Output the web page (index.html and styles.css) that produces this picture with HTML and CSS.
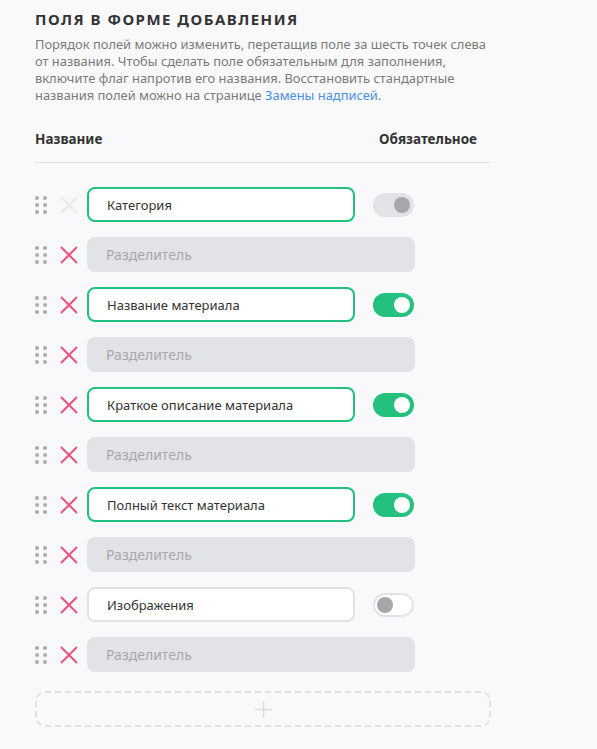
FILE: index.html
```html
<!DOCTYPE html>
<html lang="ru">
<head>
<meta charset="utf-8">
<title>Поля в форме добавления</title>
<link rel="stylesheet" href="styles.css">
</head>
<body>
<div class="page">
  <h2 class="title">Поля в форме добавления</h2>
  <p class="desc">Порядок полей можно изменить, перетащив поле за шесть точек слева от названия. Чтобы сделать поле обязательным для заполнения, включите флаг напротив его названия. Восстановить стандартные названия полей можно на странице <a href="#" class="link">Замены надписей</a>.</p>

  <div class="thead">
    <span>Название</span>
    <span class="thead-req">Обязательное</span>
  </div>

  <div class="rows">
    <div class="row">
      <span class="grip"><i></i><i></i><i></i><i></i><i></i><i></i></span>
      <svg class="del del-off" viewBox="0 0 18 18"><path d="M1 1L17 17M17 1L1 17"/></svg>
      <div class="field">Категория</div>
      <span class="toggle toggle-locked"><span class="knob"></span></span>
    </div>
    <div class="row">
      <span class="grip"><i></i><i></i><i></i><i></i><i></i><i></i></span>
      <svg class="del" viewBox="0 0 18 18"><path d="M1 1L17 17M17 1L1 17"/></svg>
      <div class="sep">Разделитель</div>
    </div>
    <div class="row">
      <span class="grip"><i></i><i></i><i></i><i></i><i></i><i></i></span>
      <svg class="del" viewBox="0 0 18 18"><path d="M1 1L17 17M17 1L1 17"/></svg>
      <div class="field">Название материала</div>
      <span class="toggle toggle-on"><span class="knob"></span></span>
    </div>
    <div class="row">
      <span class="grip"><i></i><i></i><i></i><i></i><i></i><i></i></span>
      <svg class="del" viewBox="0 0 18 18"><path d="M1 1L17 17M17 1L1 17"/></svg>
      <div class="sep">Разделитель</div>
    </div>
    <div class="row">
      <span class="grip"><i></i><i></i><i></i><i></i><i></i><i></i></span>
      <svg class="del" viewBox="0 0 18 18"><path d="M1 1L17 17M17 1L1 17"/></svg>
      <div class="field">Краткое описание материала</div>
      <span class="toggle toggle-on"><span class="knob"></span></span>
    </div>
    <div class="row">
      <span class="grip"><i></i><i></i><i></i><i></i><i></i><i></i></span>
      <svg class="del" viewBox="0 0 18 18"><path d="M1 1L17 17M17 1L1 17"/></svg>
      <div class="sep">Разделитель</div>
    </div>
    <div class="row">
      <span class="grip"><i></i><i></i><i></i><i></i><i></i><i></i></span>
      <svg class="del" viewBox="0 0 18 18"><path d="M1 1L17 17M17 1L1 17"/></svg>
      <div class="field">Полный текст материала</div>
      <span class="toggle toggle-on"><span class="knob"></span></span>
    </div>
    <div class="row">
      <span class="grip"><i></i><i></i><i></i><i></i><i></i><i></i></span>
      <svg class="del" viewBox="0 0 18 18"><path d="M1 1L17 17M17 1L1 17"/></svg>
      <div class="sep">Разделитель</div>
    </div>
    <div class="row">
      <span class="grip"><i></i><i></i><i></i><i></i><i></i><i></i></span>
      <svg class="del" viewBox="0 0 18 18"><path d="M1 1L17 17M17 1L1 17"/></svg>
      <div class="field field-plain">Изображения</div>
      <span class="toggle toggle-off"><span class="knob"></span></span>
    </div>
    <div class="row">
      <span class="grip"><i></i><i></i><i></i><i></i><i></i><i></i></span>
      <svg class="del" viewBox="0 0 18 18"><path d="M1 1L17 17M17 1L1 17"/></svg>
      <div class="sep">Разделитель</div>
    </div>
  </div>

  <div class="add">
    <svg class="plus" viewBox="0 0 20 20"><path d="M10 1V19M1 10H19"/></svg>
  </div>
</div>
</body>
</html>
```

FILE: styles.css
```css
* { box-sizing: border-box; }

html, body {
  margin: 0;
  background: #f9f9fb;
}

body {
  font-family: "Noto Sans", "Open Sans", "Liberation Sans", sans-serif;
  color: #333;
}

.page {
  width: 456px;
  margin-left: 35px;
  padding-top: 9px;
}

.title {
  margin: 0;
  font-size: 15px;
  font-weight: 700;
  letter-spacing: 1.5px;
  text-transform: uppercase;
  color: #333;
  line-height: 20px;
}

.desc {
  margin: 7px 0 0;
  font-size: 12.9px;
  line-height: 17px;
  color: #7a7a7a;
}

.link {
  color: #4a8ee6;
  text-decoration: none;
}

.thead {
  display: flex;
  justify-content: space-between;
  margin-top: 26px;
  padding: 0 14px 14px 0;
  border-bottom: 1px solid #e1e1e3;
  font-size: 13.5px;
  font-weight: 700;
  line-height: 18px;
  color: #333;
}

.rows {
  display: flex;
  flex-direction: column;
  gap: 15px;
  margin-top: 24px;
}

.row {
  display: flex;
  align-items: center;
  height: 35px;
}

.grip {
  display: grid;
  grid-template-columns: 4px 4px;
  grid-auto-rows: 4px;
  column-gap: 4px;
  row-gap: 3px;
  width: 12px;
  margin-right: 13px;
}

.grip i {
  width: 4px;
  height: 4px;
  border-radius: 50%;
  background: #ababab;
}

.del {
  width: 18px;
  height: 18px;
  margin-right: 9px;
  fill: none;
  stroke: #e8547c;
  stroke-width: 2;
}

.del-off {
  stroke: #e8e8ea;
}

.field {
  width: 268px;
  height: 35px;
  display: flex;
  align-items: center;
  padding-left: 18px;
  border: 2px solid #1ec27e;
  border-radius: 8px;
  background: #fff;
  font-size: 13px;
  color: #333;
}

.field-plain {
  border-color: #e2e2e5;
}

.sep {
  width: 328px;
  height: 35px;
  display: flex;
  align-items: center;
  padding-left: 19px;
  border-radius: 8px;
  background: #e2e3e6;
  font-size: 14px;
  color: #a8a8ac;
}

.toggle {
  width: 41px;
  height: 24px;
  margin-left: 18px;
  border-radius: 12px;
  display: flex;
  align-items: center;
  padding: 0 4px;
}

.knob {
  width: 16px;
  height: 16px;
  border-radius: 50%;
}

.toggle-on {
  background: #24c07d;
  justify-content: flex-end;
}

.toggle-on .knob { background: #fff; }

.toggle-locked {
  background: #e2e3e6;
  justify-content: flex-end;
}

.toggle-locked .knob { background: #a6a6ab; }

.toggle-off {
  background: #fff;
  border: 2px solid #e2e3e6;
  justify-content: flex-start;
  padding: 0 2px;
}

.toggle-off .knob { background: #a6a6ab; }

.add {
  margin-top: 19px;
  height: 36px;
  border: 2px dashed #e0e0e2;
  border-radius: 10px;
  display: flex;
  align-items: center;
  justify-content: center;
}

.plus {
  width: 19px;
  height: 19px;
  fill: none;
  stroke: #dcdcde;
  stroke-width: 1.5;
}
```
